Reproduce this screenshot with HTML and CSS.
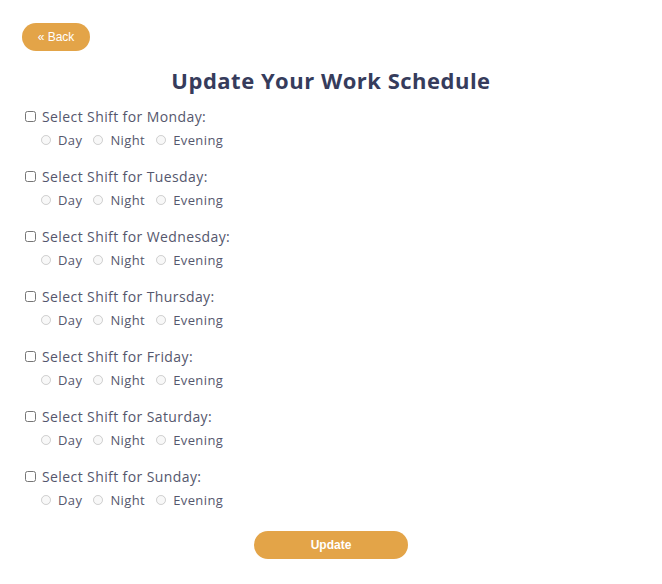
FILE: index.html
```html
<!DOCTYPE html>
<html>
<head>
<meta charset="utf-8">
<link rel="stylesheet" href="styles.css">
</head>
<body>
<div class="page">
  <button class="back">« Back</button>
  <h1 class="title">Update Your Work Schedule</h1>
  <form class="schedule">
    <div class="day">
      <label class="day-label"><input type="checkbox" class="check"> Select Shift for Monday:</label>
      <div class="shifts">
        <label class="shift"><input type="radio" name="mon" disabled class="radio"> Day</label>
        <label class="shift"><input type="radio" name="mon" disabled class="radio"> Night</label>
        <label class="shift"><input type="radio" name="mon" disabled class="radio"> Evening</label>
      </div>
    </div>
    <div class="day">
      <label class="day-label"><input type="checkbox" class="check"> Select Shift for Tuesday:</label>
      <div class="shifts">
        <label class="shift"><input type="radio" name="tue" disabled class="radio"> Day</label>
        <label class="shift"><input type="radio" name="tue" disabled class="radio"> Night</label>
        <label class="shift"><input type="radio" name="tue" disabled class="radio"> Evening</label>
      </div>
    </div>
    <div class="day">
      <label class="day-label"><input type="checkbox" class="check"> Select Shift for Wednesday:</label>
      <div class="shifts">
        <label class="shift"><input type="radio" name="wed" disabled class="radio"> Day</label>
        <label class="shift"><input type="radio" name="wed" disabled class="radio"> Night</label>
        <label class="shift"><input type="radio" name="wed" disabled class="radio"> Evening</label>
      </div>
    </div>
    <div class="day">
      <label class="day-label"><input type="checkbox" class="check"> Select Shift for Thursday:</label>
      <div class="shifts">
        <label class="shift"><input type="radio" name="thu" disabled class="radio"> Day</label>
        <label class="shift"><input type="radio" name="thu" disabled class="radio"> Night</label>
        <label class="shift"><input type="radio" name="thu" disabled class="radio"> Evening</label>
      </div>
    </div>
    <div class="day">
      <label class="day-label"><input type="checkbox" class="check"> Select Shift for Friday:</label>
      <div class="shifts">
        <label class="shift"><input type="radio" name="fri" disabled class="radio"> Day</label>
        <label class="shift"><input type="radio" name="fri" disabled class="radio"> Night</label>
        <label class="shift"><input type="radio" name="fri" disabled class="radio"> Evening</label>
      </div>
    </div>
    <div class="day">
      <label class="day-label"><input type="checkbox" class="check"> Select Shift for Saturday:</label>
      <div class="shifts">
        <label class="shift"><input type="radio" name="sat" disabled class="radio"> Day</label>
        <label class="shift"><input type="radio" name="sat" disabled class="radio"> Night</label>
        <label class="shift"><input type="radio" name="sat" disabled class="radio"> Evening</label>
      </div>
    </div>
    <div class="day">
      <label class="day-label"><input type="checkbox" class="check"> Select Shift for Sunday:</label>
      <div class="shifts">
        <label class="shift"><input type="radio" name="sun" disabled class="radio"> Day</label>
        <label class="shift"><input type="radio" name="sun" disabled class="radio"> Night</label>
        <label class="shift"><input type="radio" name="sun" disabled class="radio"> Evening</label>
      </div>
    </div>
    <div class="actions">
      <button type="button" class="update">Update</button>
    </div>
  </form>
</div>
</body>
</html>
```
FILE: styles.css
```css
* { box-sizing: border-box; }
body {
  margin: 0;
  background: #fff;
  font-family: "Open Sans", "DejaVu Sans", sans-serif;
  color: #4a4d66;
}
.page {
  padding: 23px 22px 0 22px;
}
.back {
  display: block;
  width: 68px;
  height: 28px;
  border: none;
  border-radius: 14px;
  background: #e3a448;
  color: #fff;
  font-family: "Liberation Sans", Arial, sans-serif;
  font-size: 12px;
  padding: 0;
}
.title {
  margin: 14px 0 12px;
  height: 30px;
  line-height: 30px;
  text-align: center;
  font-size: 22px;
  font-weight: 700;
  letter-spacing: 0.5px;
  color: #363c5c;
}
.schedule { margin: 0; }
.day {
  display: flex;
  flex-direction: column;
  gap: 3px;
  margin-bottom: 17px;
}
.day-label {
  display: flex;
  align-items: center;
  height: 20px;
  margin-top: -1px;
  margin-bottom: 1px;
  font-size: 14px;
  letter-spacing: 0.4px;
  color: #55576d;
}
.check {
  width: 11px;
  height: 11px;
  margin: 0 6px 0 3px;
}
.shifts {
  display: flex;
  align-items: center;
  height: 20px;
  padding-left: 19px;
  gap: 11px;
}
.shift {
  display: flex;
  align-items: center;
  font-size: 13px;
  letter-spacing: 0.4px;
  color: #55576d;
}
.radio {
  width: 10px;
  height: 10px;
  margin: 0 7px 0 0;
}
.actions {
  display: flex;
  justify-content: center;
  padding-top: 4px;
}
.update {
  width: 154px;
  height: 28px;
  border: none;
  border-radius: 14px;
  background: #e3a448;
  color: #fff;
  font-family: "Liberation Sans", Arial, sans-serif;
  font-weight: 700;
  font-size: 12px;
  padding: 0;
}
```
